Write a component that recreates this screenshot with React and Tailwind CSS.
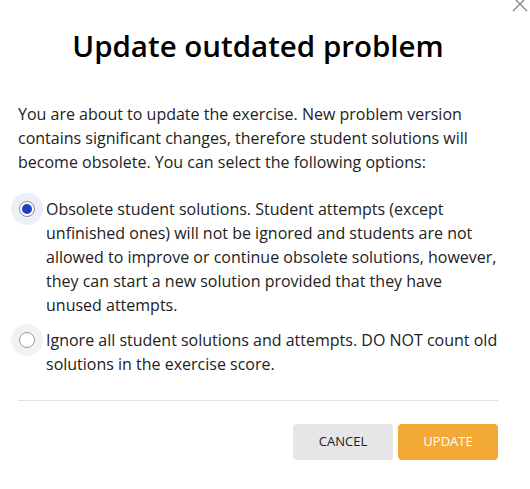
import { useState } from "react";

const options = [
  {
    id: "obsolete",
    label:
      "Obsolete student solutions. Student attempts (except unfinished ones) will not be ignored and students are not allowed to improve or continue obsolete solutions, however, they can start a new solution provided that they have unused attempts.",
  },
  {
    id: "ignore",
    label:
      "Ignore all student solutions and attempts. DO NOT count old solutions in the exercise score.",
  },
];

function Radio({ checked }) {
  return (
    <span
      className={
        "flex h-8 w-8 shrink-0 items-center justify-center rounded-full " +
        (checked ? "bg-[#eceffa]" : "bg-[#f2f2f2]")
      }
    >
      <span
        className={
          "flex h-4 w-4 items-center justify-center rounded-full border bg-white " +
          (checked ? "border-[#8a8a8a]" : "border-[#9a9a9a]")
        }
      >
        {checked && <span className="h-2.5 w-2.5 rounded-full bg-[#1f3fbf]" />}
      </span>
    </span>
  );
}

export default function App() {
  const [selected, setSelected] = useState("obsolete");

  return (
    <div
      className="relative w-[530px] h-[489px] bg-white text-[#222]"
      style={{ fontFamily: '"Open Sans", sans-serif' }}
    >
      <button className="absolute right-0 top-[-6px] text-[#8a8a8a]" aria-label="Close">
        <svg width="20" height="20" viewBox="0 0 20 20" stroke="currentColor" strokeWidth="1.4">
          <path d="M3 3 L17 17 M17 3 L3 17" />
        </svg>
      </button>

      <div className="flex flex-col pl-[18px] pr-[32px] pt-[26px]">
        <h1 className="text-center text-[29.5px] leading-[40px] font-semibold text-black">
          Update outdated problem
        </h1>

        <p className="mt-[36px] text-[16px] leading-[24px]">
          You are about to update the exercise. New problem version contains significant changes,
          therefore student solutions will become obsolete. You can select the following options:
        </p>

        <div className="mt-[23px] flex flex-col gap-[11px]">
          {options.map((o) => (
            <label
              key={o.id}
              className="flex cursor-pointer items-start gap-[3px]"
              onClick={() => setSelected(o.id)}
            >
              <span className="-ml-[7px] -mt-[4px]">
                <Radio checked={selected === o.id} />
              </span>
              <span className="text-[16px] leading-[24px]">{o.label}</span>
            </label>
          ))}
        </div>

        <div className="mt-[24px] h-px w-full bg-[#e3e3e3]" />

        <div className="mt-[23px] flex justify-end gap-[5px]">
          <button className="h-9 w-[100px] rounded bg-[#e6e6e6] text-[13px] text-[#222]">
            CANCEL
          </button>
          <button className="h-9 w-[100px] rounded bg-[#f2a935] text-[13px] text-white">
            UPDATE
          </button>
        </div>
      </div>
    </div>
  );
}
